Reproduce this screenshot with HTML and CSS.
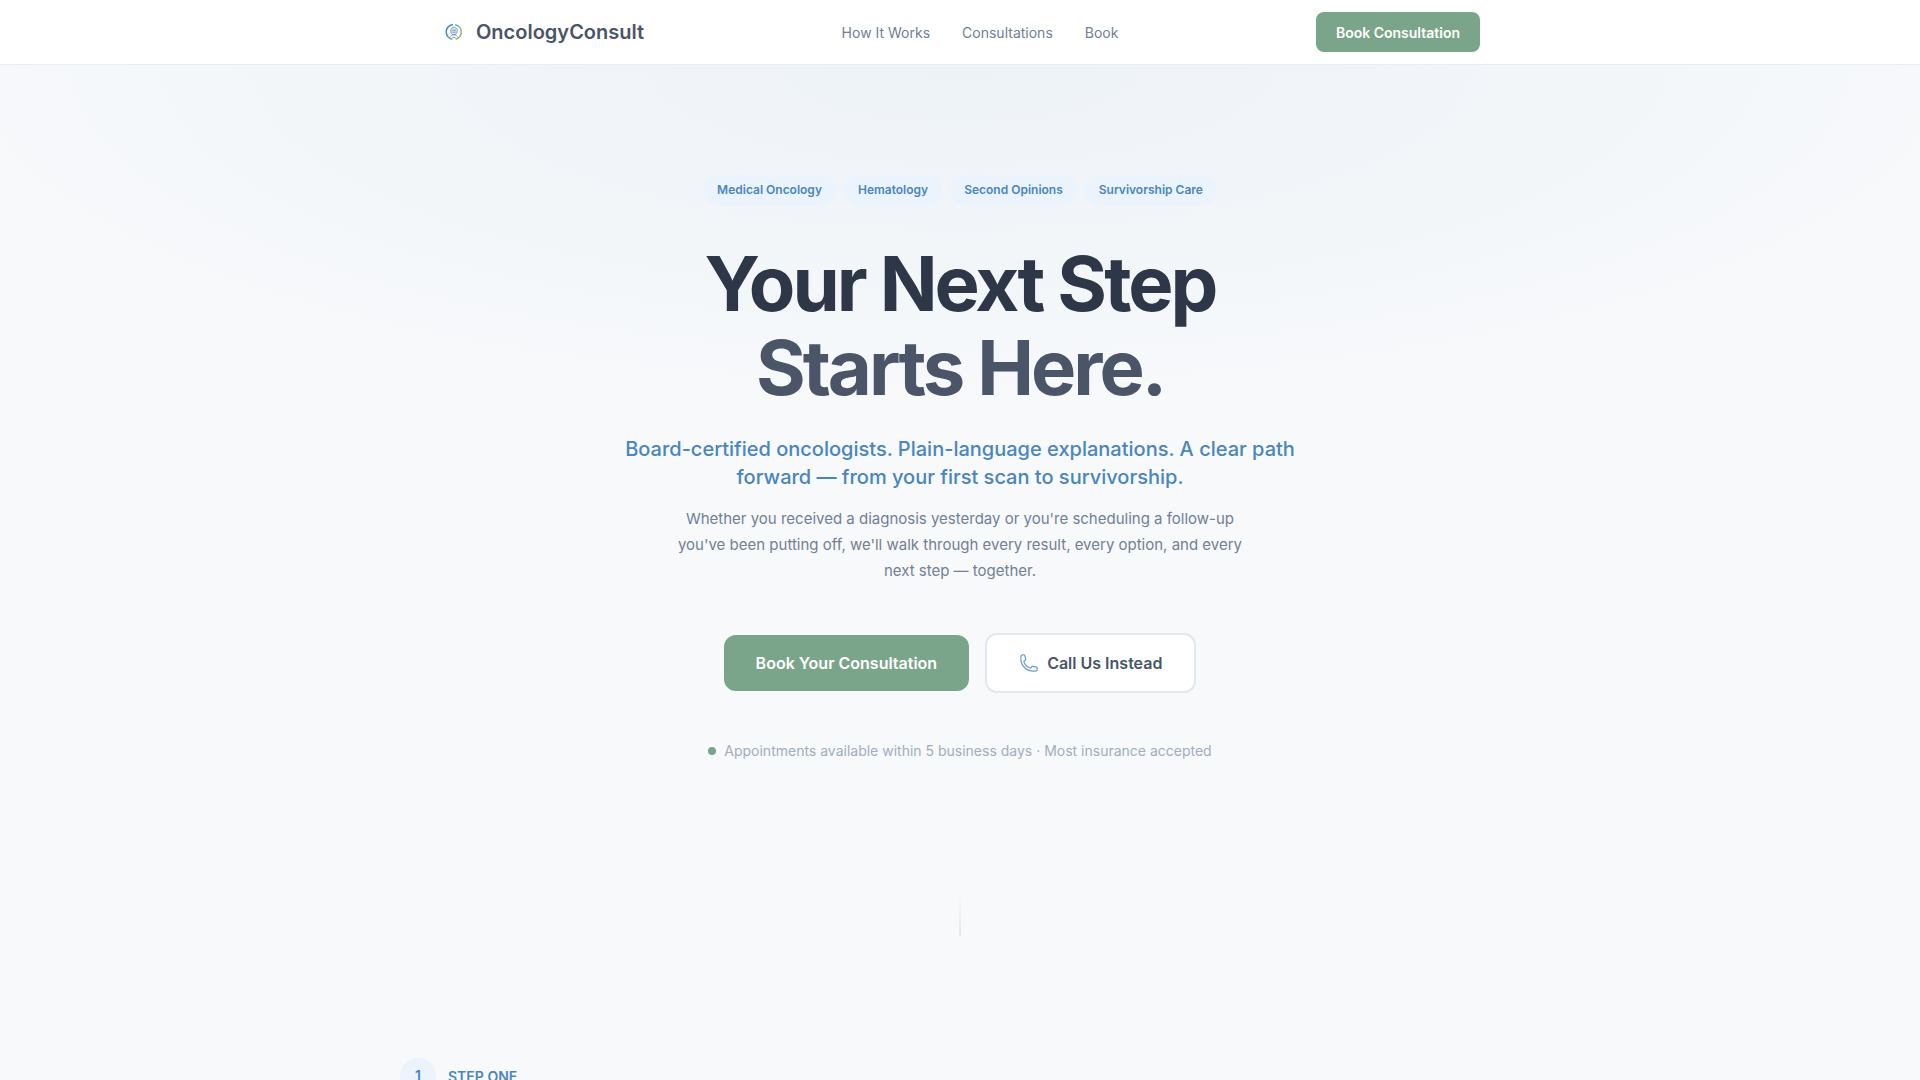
FILE: index.html
```html
<!DOCTYPE html>
<html lang="en">
<head>
	<meta charset="UTF-8">
	<meta name="viewport" content="width=device-width, initial-scale=1">
	<title>OncologyConsult</title>
	<link rel="stylesheet" href="styles.css">
</head>
<body>
	<header class="header">
		<div class="header-inner">
			<a class="logo" href="#">
				<svg class="logo-mark" viewBox="0 0 28 28" fill="none" aria-hidden="true">
					<defs>
						<linearGradient id="ring" x1="6" y1="10" x2="22" y2="16" gradientUnits="userSpaceOnUse">
							<stop offset="0" stop-color="#3f8fc0"/>
							<stop offset=".5" stop-color="#6ea6ac"/>
							<stop offset="1" stop-color="#b3b56a"/>
						</linearGradient>
					</defs>
					<path d="M13 6.6A7.4 7.4 0 0 0 12.6 21.3M15.2 6.7A7.4 7.4 0 0 1 15.6 21.2" stroke="url(#ring)" stroke-width="1.6"/>
					<path d="M10.8 13.2a3.3 3.3 0 1 1 6.4 0c0 1.6-1 2.6-1.8 3.4h-2.8c-.8-.8-1.8-1.8-1.8-3.4z" fill="#d9e6ef" stroke="#7fa3bd" stroke-width="1"/>
					<path d="M12 12.2h4M12.4 14.2h3.2M10.4 18.8c1-1.6 2-2 3.6-2s2.6.4 3.6 2M12.4 19.4h3.2" stroke="#6d95b4" stroke-width=".9"/>
				</svg>
				<span>OncologyConsult</span>
			</a>
			<nav class="nav">
				<a href="#steps">How It Works</a>
				<a href="#consultations">Consultations</a>
				<a href="#book">Book</a>
			</nav>
			<button class="btn-small" type="button">Book Consultation</button>
		</div>
	</header>

	<main>
		<section class="hero">
			<ul class="tags">
				<li>Medical Oncology</li>
				<li>Hematology</li>
				<li>Second Opinions</li>
				<li>Survivorship Care</li>
			</ul>
			<h1>Your Next Step<br><span>Starts Here.</span></h1>
			<p class="lead">Board-certified oncologists. Plain-language explanations. A clear path<br>forward — from your first scan to survivorship.</p>
			<p class="text">Whether you received a diagnosis yesterday or you're scheduling a follow-up<br>you've been putting off, we'll walk through every result, every option, and every<br>next step — together.</p>
			<div class="actions">
				<button class="btn btn-green" type="button">Book Your Consultation</button>
				<button class="btn btn-white" type="button">
					<svg class="phone" viewBox="0 0 24 24" fill="none" stroke="currentColor" stroke-width="1.5" stroke-linejoin="round" aria-hidden="true">
						<path d="M2.25 6.75c0 8.284 6.716 15 15 15h2.25a2.25 2.25 0 0 0 2.25-2.25v-1.372c0-.516-.351-.966-.852-1.091l-4.423-1.106c-.44-.11-.902.055-1.173.417l-.97 1.293c-.282.376-.769.542-1.21.38a12.035 12.035 0 0 1-7.143-7.143c-.162-.441.004-.928.38-1.21l1.293-.97c.363-.271.527-.734.417-1.173L6.963 3.102a1.125 1.125 0 0 0-1.091-.852H4.5A2.25 2.25 0 0 0 2.25 4.5v2.25z"/>
					</svg>
					Call Us Instead
				</button>
			</div>
			<p class="note"><span class="dot"></span>Appointments available within 5 business days · Most insurance accepted</p>
			<div class="line"></div>
		</section>

		<section class="steps" id="steps">
			<div class="step-head">
				<span class="step-num">1</span>
				<span>STEP ONE</span>
			</div>
		</section>
	</main>
</body>
</html>
```
FILE: styles.css
```css
*{box-sizing:border-box;}
body{margin:0;font-family:Inter,"Liberation Sans",sans-serif;color:#2d3748;background-color:#f7f9fb;}
h1,p,ul{margin:0;padding:0;}
ul{list-style:none;}
a{color:inherit;text-decoration:none;}
button{font-family:inherit;cursor:pointer;}

.header{background-color:#fff;border-bottom:1px solid #e9eef3;}
.header-inner{display:flex;align-items:center;justify-content:space-between;max-width:1088px;height:64px;margin:0 auto;padding:0 24px;}
.logo{display:flex;align-items:center;gap:8px;font-size:20px;font-weight:600;color:#4a5568;}
.logo-mark{width:28px;height:28px;}
.nav{display:flex;gap:32px;font-size:14px;color:#718096;}
.btn-small{height:40px;padding:0 20px;border:0;border-radius:8px;background-color:#7ba58a;color:#fff;font-size:14px;font-weight:600;}

.hero{display:flex;flex-direction:column;align-items:center;padding:110px 24px 0;text-align:center;background:radial-gradient(55% 340px at 50% 0,#edf2f7,#f7f9fb);}
.tags{display:flex;flex-wrap:wrap;justify-content:center;gap:8px;}
.tags li{padding:6px 14px;border-radius:15px;background-color:#ebf4fd;color:#4a85bd;font-size:12px;line-height:18px;font-weight:600;}
h1{margin-top:36px;font-size:76px;line-height:84px;font-weight:700;letter-spacing:-3px;}
h1 span{color:#4a5568;}
.lead{margin-top:26px;font-size:20px;line-height:28px;font-weight:500;color:#4a85bd;}
.text{margin-top:15px;font-size:15px;line-height:26px;color:#718096;}
.actions{display:flex;flex-wrap:wrap;align-items:center;justify-content:center;gap:16px;margin-top:49px;}
.btn{display:flex;align-items:center;gap:8px;padding:16px 32px;border:0;border-radius:12px;font-size:16px;line-height:24px;font-weight:600;}
.btn-green{background-color:#7ba58a;color:#fff;}
.btn-white{border:2px solid #e2e8f0;background-color:#fff;color:#4a5568;}
.phone{width:20px;height:20px;color:#6f9fcb;}
.note{display:flex;align-items:center;gap:8px;margin-top:48px;font-size:14px;line-height:20px;color:#a0aec0;}
.dot{width:8px;height:8px;border-radius:50%;background-color:#7ba58a;}
.line{width:2px;height:40px;margin-top:135px;background:linear-gradient(rgba(226,232,240,0),#e2e8f0);}

.steps{max-width:1168px;margin:0 auto;padding:122px 24px 0;}
.step-head{display:flex;align-items:center;gap:12px;font-size:14px;font-weight:600;color:#4a85bd;}
.step-num{width:36px;height:36px;border-radius:50%;background-color:#ebf4fd;line-height:36px;text-align:center;}
```
